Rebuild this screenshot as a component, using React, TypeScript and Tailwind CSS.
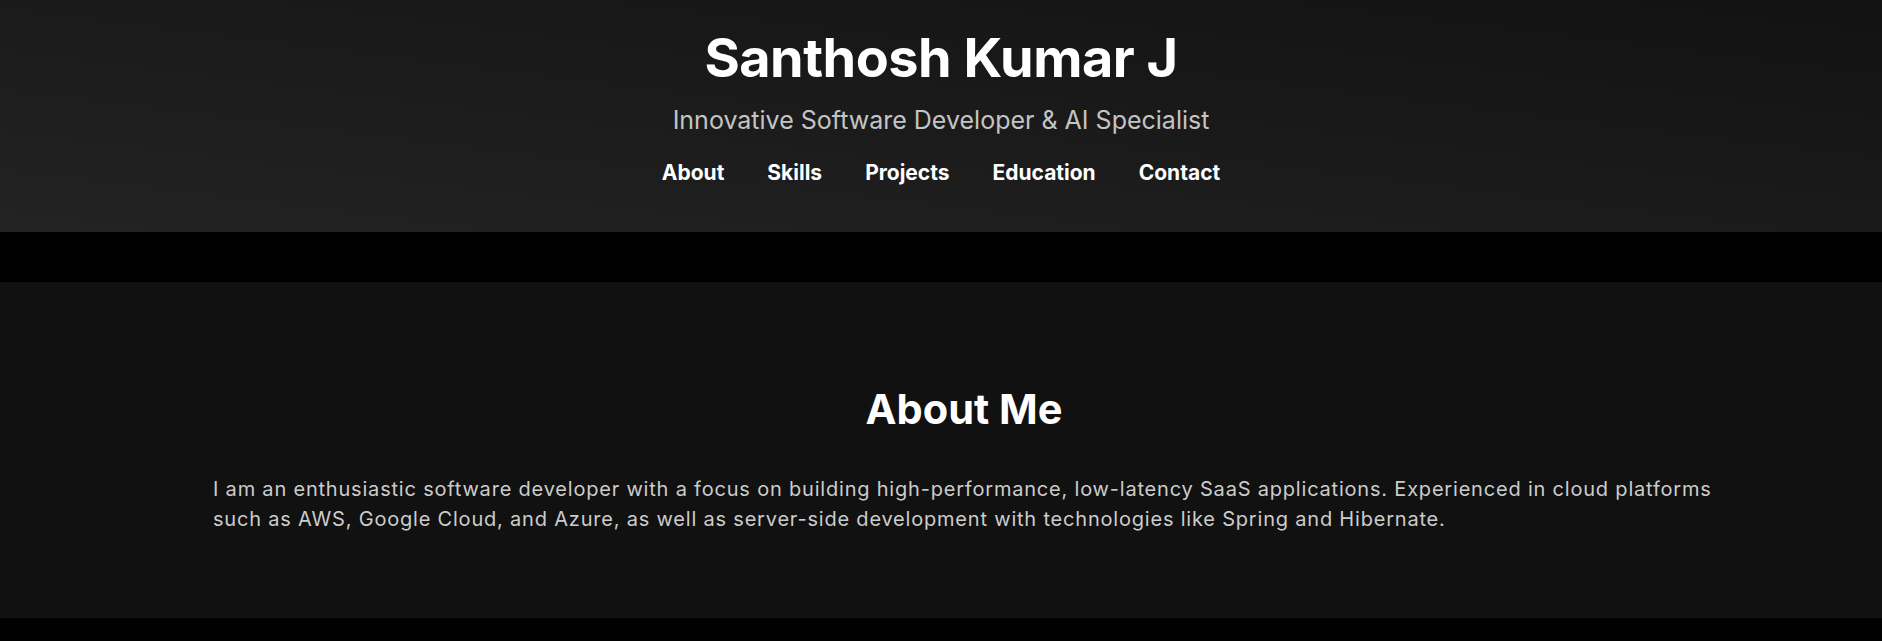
export default function App() {
  const links = ["About", "Skills", "Projects", "Education", "Contact"];
  return (
    <div className="min-h-screen bg-black font-['Inter',sans-serif] text-white">
      <header className="h-[232px] bg-gradient-to-tr from-[#232323] to-[#121212] pt-[27px] text-center">
        <h1 className="text-[54px] leading-[62px] font-bold tracking-[-0.5px]">Santhosh Kumar J</h1>
        <p className="mt-[16px] text-[25px] leading-[30px] text-[#c4c4c4]">
          Innovative Software Developer &amp; AI Specialist
        </p>
        <nav className="mt-[25px] flex justify-center gap-[43px]">
          {links.map((l) => (
            <a key={l} href={"#" + l.toLowerCase()} className="text-[21px] leading-[26px] font-bold text-white">
              {l}
            </a>
          ))}
        </nav>
      </header>

      <section className="mt-[50px] h-[336px] bg-[#111111] pt-[102px] pl-[213px]">
        <div className="w-[1502px]">
          <h2 className="text-center text-[41.5px] leading-[50px] font-bold">About Me</h2>
          <p className="mt-[40px] text-[20px] leading-[30px] tracking-[0.8px] text-[#cccccc]">
            I am an enthusiastic software developer with a focus on building high-performance, low-latency SaaS
            applications. Experienced in cloud platforms such as AWS, Google Cloud, and Azure, as well as server-side
            development with technologies like Spring and Hibernate.
          </p>
        </div>
      </section>
    </div>
  );
}
